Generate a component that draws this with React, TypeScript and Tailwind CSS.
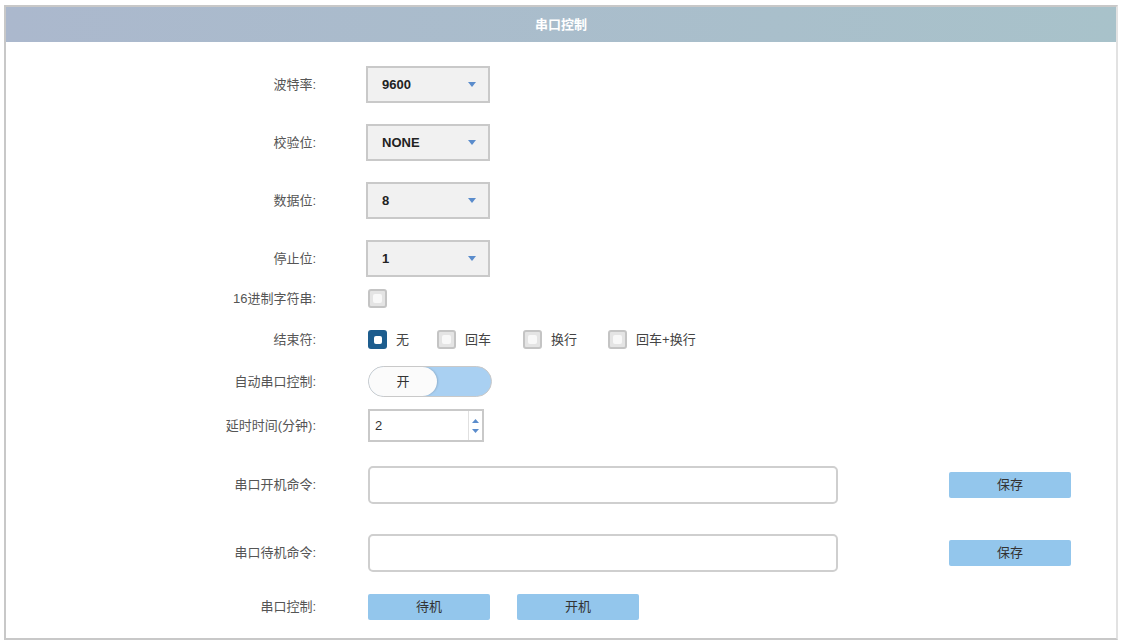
import React, { useState } from 'react';

const font = { fontFamily: '"Liberation Sans", "Noto Sans CJK SC", sans-serif' };

const labelClass = 'w-[312px] shrink-0 text-right text-[13px] text-[#555] pr-[2px]';

const SelectBox: React.FC<{ value: string }> = ({ value }) => (
  <div className="ml-[48px] flex h-[37px] w-[124px] items-center justify-between border-2 border-[#c9c9c9] bg-[#f1f1f1] pl-[14px] pr-[12px]">
    <span className="text-[13px] font-bold text-[#222]">{value}</span>
    <svg width="8" height="5" viewBox="0 0 8 5">
      <path d="M0 0h8L4 5z" fill="#5a8ccc" />
    </svg>
  </div>
);

const Square: React.FC<{ checked?: boolean }> = ({ checked }) =>
  checked ? (
    <div className="flex h-[19px] w-[19px] items-center justify-center rounded-[3px] bg-[#1d5d8e]">
      <div className="h-[8px] w-[8px] rounded-[2px] bg-white" />
    </div>
  ) : (
    <div className="flex h-[19px] w-[19px] items-center justify-center rounded-[3px] border-2 border-[#c4c4c4] bg-[#e4e4e4]">
      <div className="h-[9px] w-[9px] rounded-[2px] bg-[#f8f8f8]" />
    </div>
  );

const BlueButton: React.FC<{ text: string; className?: string }> = ({ text, className = '' }) => (
  <button
    className={`flex h-[26px] w-[122px] items-center justify-center rounded-[2px] bg-[#93c6ec] text-[13px] text-[#333] ${className}`}
  >
    {text}
  </button>
);

export default function App() {
  const [ending, setEnding] = useState('none');
  const endings = [
    { id: 'none', label: '无', gap: '' },
    { id: 'cr', label: '回车', gap: 'ml-[28px]' },
    { id: 'lf', label: '换行', gap: 'ml-[32px]' },
    { id: 'crlf', label: '回车+换行', gap: 'ml-[31px]' },
  ];

  return (
    <div className="h-[642px] w-[1121px] bg-white pl-[4px] pr-[3px] pt-[5px]" style={font}>
      <div className="flex h-[635px] flex-col border-2 border-[#c8c8c8] border-r-[#e2e2e2]">
        {/* title bar */}
        <div className="flex h-[35px] shrink-0 items-center justify-center bg-linear-to-r from-[#abb8cd] to-[#a8c2ca]">
          <span className="text-[13px] font-bold text-white">串口控制</span>
        </div>

        <div className="flex flex-col">
          <div className="mt-[24px] flex items-center">
            <div className={labelClass}>波特率:</div>
            <SelectBox value="9600" />
          </div>
          <div className="mt-[21px] flex items-center">
            <div className={labelClass}>校验位:</div>
            <SelectBox value="NONE" />
          </div>
          <div className="mt-[21px] flex items-center">
            <div className={labelClass}>数据位:</div>
            <SelectBox value="8" />
          </div>
          <div className="mt-[21px] flex items-center">
            <div className={labelClass}>停止位:</div>
            <SelectBox value="1" />
          </div>

          <div className="mt-[12px] flex h-[19px] items-center">
            <div className={labelClass}>16进制字符串:</div>
            <div className="ml-[50px]">
              <Square />
            </div>
          </div>

          <div className="mt-[22px] flex h-[19px] items-center">
            <div className={labelClass}>结束符:</div>
            <div className="ml-[50px] flex items-center">
              {endings.map((e) => (
                <div
                  key={e.id}
                  className={`flex cursor-pointer items-center ${e.gap}`}
                  onClick={() => setEnding(e.id)}
                >
                  <Square checked={ending === e.id} />
                  <span className="ml-[9px] text-[13px] text-[#444]">{e.label}</span>
                </div>
              ))}
            </div>
          </div>

          <div className="mt-[17px] flex items-center">
            <div className={labelClass}>自动串口控制:</div>
            <div className="ml-[50px] flex h-[31px] w-[124px] overflow-hidden rounded-full border border-[#c9c9c9] bg-[#a9d0f2]">
              <div className="flex w-[68px] items-center justify-center rounded-r-full bg-[#fbfbfb] shadow-[1px_0_2px_rgba(0,0,0,0.15)]">
                <span className="text-[13px] text-[#333]">开</span>
              </div>
            </div>
          </div>

          <div className="mt-[12px] flex items-center">
            <div className={labelClass}>延时时间(分钟):</div>
            <div className="ml-[50px] flex h-[33px] w-[116px] items-center border-2 border-[#c9c9c9] bg-white">
              <span className="flex-1 pl-[5px] text-[13px] text-[#333]">2</span>
              <div className="mr-[1px] flex h-full w-[13px] flex-col items-center justify-center gap-[6px] border-l border-[#e0e0e0]">
                <svg width="7" height="4" viewBox="0 0 7 4">
                  <path d="M0 4h7L3.5 0z" fill="#5a8ccc" />
                </svg>
                <svg width="7" height="4" viewBox="0 0 7 4">
                  <path d="M0 0h7L3.5 4z" fill="#5a8ccc" />
                </svg>
              </div>
            </div>
          </div>

          <div className="mt-[24px] flex items-center">
            <div className={labelClass}>串口开机命令:</div>
            <div className="ml-[50px] h-[38px] w-[470px] rounded-[5px] border-2 border-[#cfcfcf] bg-white" />
            <BlueButton text="保存" className="ml-[111px]" />
          </div>

          <div className="mt-[30px] flex items-center">
            <div className={labelClass}>串口待机命令:</div>
            <div className="ml-[50px] h-[38px] w-[470px] rounded-[5px] border-2 border-[#cfcfcf] bg-white" />
            <BlueButton text="保存" className="ml-[111px]" />
          </div>

          <div className="mt-[22px] flex items-center">
            <div className={labelClass}>串口控制:</div>
            <BlueButton text="待机" className="ml-[50px]" />
            <BlueButton text="开机" className="ml-[27px]" />
          </div>
        </div>
      </div>
    </div>
  );
}
